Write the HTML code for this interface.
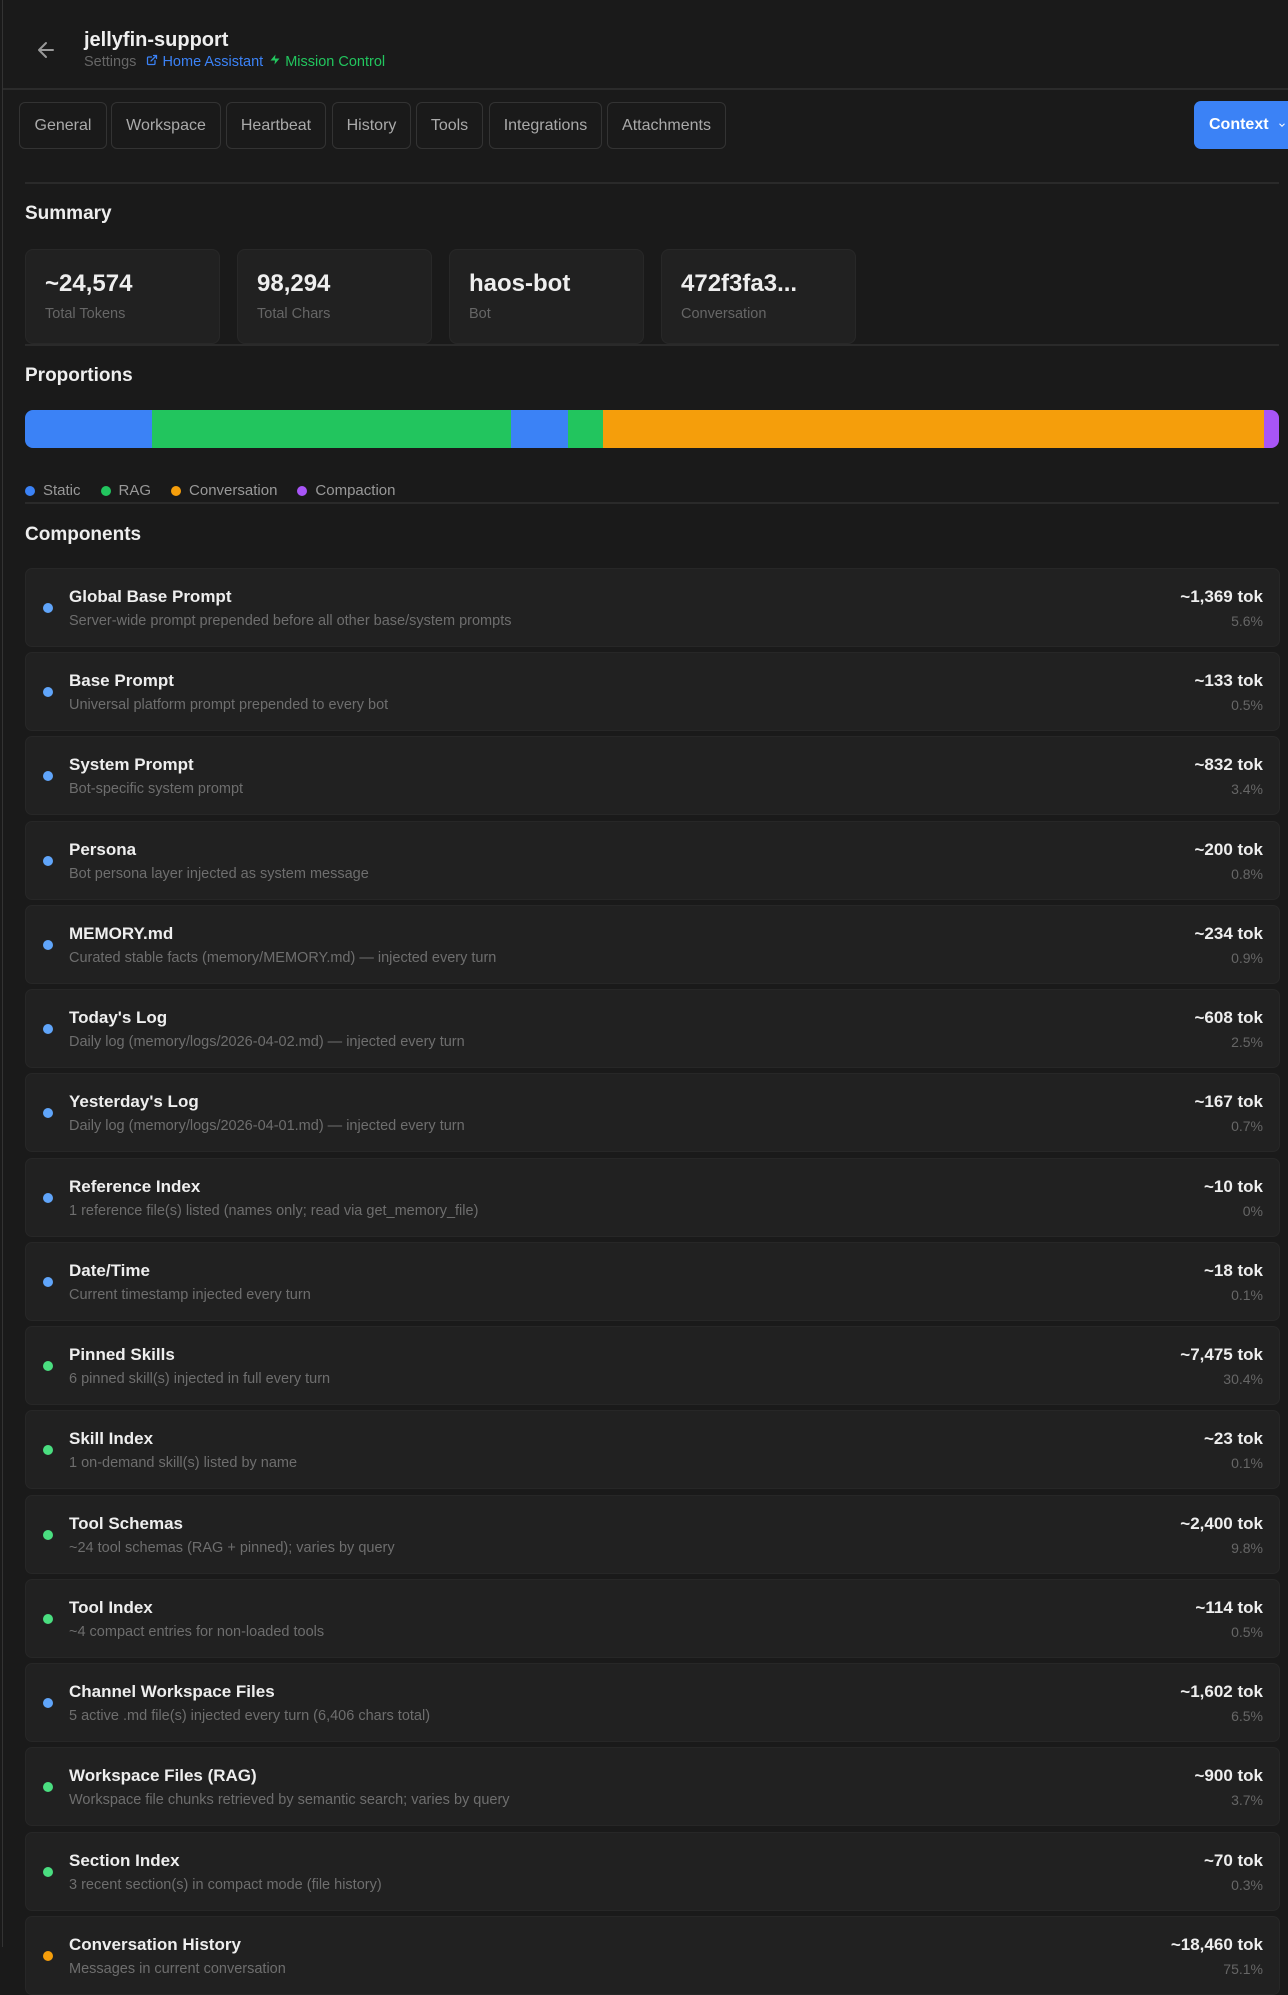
<!DOCTYPE html>
<html><head><meta charset="utf-8">
<style>
*{box-sizing:border-box;margin:0;padding:0}
html,body{width:1288px;height:1947px;overflow:hidden;background:#1a1a1a;font-family:"Liberation Sans",sans-serif;color:#e5e5e5}
.vl{position:absolute;left:2px;top:0;width:1px;height:1947px;background:#333}
.hdr{position:absolute;left:3px;top:0;width:1285px;height:90px;border-bottom:2px solid #2b2b2b}
.back{position:absolute;left:34px;top:38px}
.title{position:absolute;left:84px;top:29px;font-size:20px;font-weight:bold;color:#eee}
.sub{position:absolute;left:84px;top:53px;font-size:14.5px;color:#666;white-space:nowrap}
.sub .b{color:#3b82f6;margin-left:6px}
.sub .g{color:#22c55e;margin-left:6px}
.tab{position:absolute;top:102px;height:47px;border:1px solid #333;border-radius:6px;font-size:16px;color:#aaa;display:flex;align-items:center;justify-content:center}
.ctx{position:absolute;left:1194px;top:101px;width:110px;height:48px;background:#3b82f6;border-radius:7px;color:#fff;font-weight:bold;font-size:16px;padding-left:15px;display:flex;align-items:center}
.hr{position:absolute;left:25px;width:1254px;height:2px;background:#2a2a2a}
.h{position:absolute;left:25px;font-size:19px;font-weight:bold;color:#eee}
.card{position:absolute;top:249px;width:195px;height:95px;background:#212121;border:1px solid #282828;border-radius:8px}
.card .v{position:absolute;left:19px;top:20px;font-size:24px;font-weight:bold;color:#eee}
.card .l{position:absolute;left:19px;top:56px;font-size:14.5px;color:#666}
.bar{position:absolute;left:25px;top:410px;width:1254px;height:38px;border-radius:8px;overflow:hidden;display:flex}
.leg{position:absolute;left:25px;top:482px;font-size:15px;color:#999;display:flex;align-items:center}
.leg i{display:inline-block;width:10px;height:10px;border-radius:50%;margin-right:8px}
.leg span{margin-right:20px;display:flex;align-items:center}
.row{position:absolute;left:25px;width:1255px;height:79px;background:#212121;border:1px solid #272727;border-radius:7px}
.row .d{position:absolute;left:17px;top:34px;width:10px;height:10px;border-radius:50%}
.row .t{position:absolute;left:43px;top:18px;font-size:17px;font-weight:bold;color:#eee}
.row .s{position:absolute;left:43px;top:44px;font-size:14.5px;color:#6e6e6e}
.row .k{position:absolute;right:16px;top:18px;font-size:17px;font-weight:bold;color:#eee}
.row .p{position:absolute;right:16px;top:44px;font-size:14px;color:#666}
</style></head><body>
<div class="vl"></div>
<div class="hdr"></div>
<svg class="back" width="24" height="24" viewBox="0 0 24 24" fill="none" stroke="#999" stroke-width="2" stroke-linecap="round" stroke-linejoin="round"><path d="M19 12H5M12 19l-7-7 7-7"/></svg>
<div class="title">jellyfin-support</div>
<div class="sub">Settings <span class="b"><svg width="12" height="12" viewBox="0 0 24 24" fill="none" stroke="#3b82f6" stroke-width="2.5" stroke-linecap="round"><path d="M18 13v6a2 2 0 0 1-2 2H5a2 2 0 0 1-2-2V8a2 2 0 0 1 2-2h6M15 3h6v6M10 14L21 3"/></svg> Home Assistant</span><span class="g"><svg width="12" height="13" viewBox="0 0 24 24" fill="#22c55e"><path d="M13 2L3 14h9l-1 8 10-12h-9l1-8z"/></svg> Mission Control</span></div>
<div class="tab" style="left:19px;width:88px">General</div>
<div class="tab" style="left:111px;width:110px">Workspace</div>
<div class="tab" style="left:226px;width:100px">Heartbeat</div>
<div class="tab" style="left:332px;width:79px">History</div>
<div class="tab" style="left:416px;width:67px">Tools</div>
<div class="tab" style="left:489px;width:113px">Integrations</div>
<div class="tab" style="left:607px;width:119px">Attachments</div>
<div class="ctx">Context <svg style="margin-left:8px" width="10" height="10" viewBox="0 0 24 24" fill="none" stroke="#fff" stroke-width="2.5"><path d="M6 9l6 6 6-6"/></svg></div>
<div class="hr" style="top:182px"></div>
<div class="h" style="top:203px">Summary</div>
<div class="card" style="left:25px"><div class="v">~24,574</div><div class="l">Total Tokens</div></div>
<div class="card" style="left:237px"><div class="v">98,294</div><div class="l">Total Chars</div></div>
<div class="card" style="left:449px"><div class="v">haos-bot</div><div class="l">Bot</div></div>
<div class="card" style="left:661px"><div class="v">472f3fa3...</div><div class="l">Conversation</div></div>
<div class="hr" style="top:344px"></div>
<div class="h" style="top:365px">Proportions</div>
<div class="bar"><div style="width:127px;background:#3b82f6"></div><div style="width:359px;background:#22c55e"></div><div style="width:57px;background:#3b82f6"></div><div style="width:35px;background:#22c55e"></div><div style="width:661px;background:#f59e0b"></div><div style="flex:1;background:#a855f7"></div></div>
<div class="leg"><span><i style="background:#3b82f6"></i>Static</span><span><i style="background:#22c55e"></i>RAG</span><span><i style="background:#f59e0b"></i>Conversation</span><span><i style="background:#a855f7"></i>Compaction</span></div>
<div class="hr" style="top:502px"></div>
<div class="h" style="top:524px">Components</div>

<div class="row" style="top:568px"><i class="d" style="background:#60a5fa"></i><div class="t">Global Base Prompt</div><div class="s">Server-wide prompt prepended before all other base/system prompts</div><div class="k">~1,369 tok</div><div class="p">5.6%</div></div>
<div class="row" style="top:652px"><i class="d" style="background:#60a5fa"></i><div class="t">Base Prompt</div><div class="s">Universal platform prompt prepended to every bot</div><div class="k">~133 tok</div><div class="p">0.5%</div></div>
<div class="row" style="top:736px"><i class="d" style="background:#60a5fa"></i><div class="t">System Prompt</div><div class="s">Bot-specific system prompt</div><div class="k">~832 tok</div><div class="p">3.4%</div></div>
<div class="row" style="top:821px"><i class="d" style="background:#60a5fa"></i><div class="t">Persona</div><div class="s">Bot persona layer injected as system message</div><div class="k">~200 tok</div><div class="p">0.8%</div></div>
<div class="row" style="top:905px"><i class="d" style="background:#60a5fa"></i><div class="t">MEMORY.md</div><div class="s">Curated stable facts (memory/MEMORY.md) — injected every turn</div><div class="k">~234 tok</div><div class="p">0.9%</div></div>
<div class="row" style="top:989px"><i class="d" style="background:#60a5fa"></i><div class="t">Today's Log</div><div class="s">Daily log (memory/logs/2026-04-02.md) — injected every turn</div><div class="k">~608 tok</div><div class="p">2.5%</div></div>
<div class="row" style="top:1073px"><i class="d" style="background:#60a5fa"></i><div class="t">Yesterday's Log</div><div class="s">Daily log (memory/logs/2026-04-01.md) — injected every turn</div><div class="k">~167 tok</div><div class="p">0.7%</div></div>
<div class="row" style="top:1158px"><i class="d" style="background:#60a5fa"></i><div class="t">Reference Index</div><div class="s">1 reference file(s) listed (names only; read via get_memory_file)</div><div class="k">~10 tok</div><div class="p">0%</div></div>
<div class="row" style="top:1242px"><i class="d" style="background:#60a5fa"></i><div class="t">Date/Time</div><div class="s">Current timestamp injected every turn</div><div class="k">~18 tok</div><div class="p">0.1%</div></div>
<div class="row" style="top:1326px"><i class="d" style="background:#4ade80"></i><div class="t">Pinned Skills</div><div class="s">6 pinned skill(s) injected in full every turn</div><div class="k">~7,475 tok</div><div class="p">30.4%</div></div>
<div class="row" style="top:1410px"><i class="d" style="background:#4ade80"></i><div class="t">Skill Index</div><div class="s">1 on-demand skill(s) listed by name</div><div class="k">~23 tok</div><div class="p">0.1%</div></div>
<div class="row" style="top:1495px"><i class="d" style="background:#4ade80"></i><div class="t">Tool Schemas</div><div class="s">~24 tool schemas (RAG + pinned); varies by query</div><div class="k">~2,400 tok</div><div class="p">9.8%</div></div>
<div class="row" style="top:1579px"><i class="d" style="background:#4ade80"></i><div class="t">Tool Index</div><div class="s">~4 compact entries for non-loaded tools</div><div class="k">~114 tok</div><div class="p">0.5%</div></div>
<div class="row" style="top:1663px"><i class="d" style="background:#60a5fa"></i><div class="t">Channel Workspace Files</div><div class="s">5 active .md file(s) injected every turn (6,406 chars total)</div><div class="k">~1,602 tok</div><div class="p">6.5%</div></div>
<div class="row" style="top:1747px"><i class="d" style="background:#4ade80"></i><div class="t">Workspace Files (RAG)</div><div class="s">Workspace file chunks retrieved by semantic search; varies by query</div><div class="k">~900 tok</div><div class="p">3.7%</div></div>
<div class="row" style="top:1832px"><i class="d" style="background:#4ade80"></i><div class="t">Section Index</div><div class="s">3 recent section(s) in compact mode (file history)</div><div class="k">~70 tok</div><div class="p">0.3%</div></div>
<div class="row" style="top:1916px"><i class="d" style="background:#f59e0b"></i><div class="t">Conversation History</div><div class="s">Messages in current conversation</div><div class="k">~18,460 tok</div><div class="p">75.1%</div></div>
</body></html>
